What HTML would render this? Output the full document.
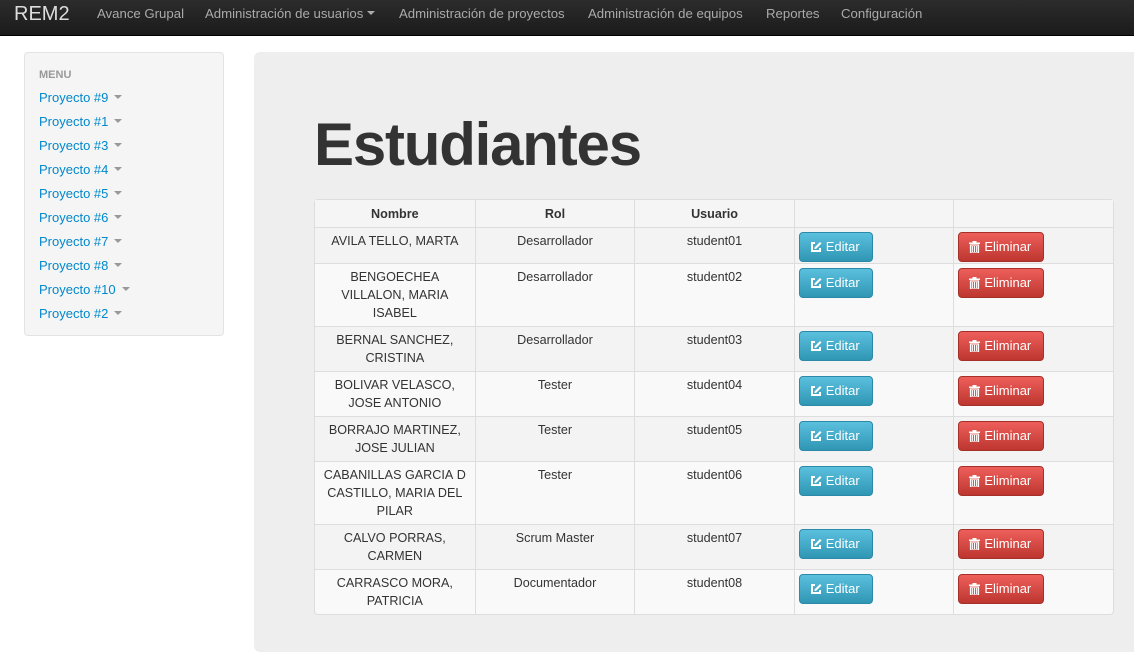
<!DOCTYPE html>
<html><head><meta charset="utf-8"><style>
*{box-sizing:border-box}
body{margin:0;width:1134px;height:615px;overflow:hidden;background:#fff;font-family:"Liberation Sans",Arial,sans-serif;font-size:13px;color:#333;position:relative}
.nav{position:absolute;left:0;top:0;width:1134px;height:36px;background:linear-gradient(#2c2c2c,#1b1b1b);border-bottom:1px solid #000}
.brand{position:absolute;left:14px;top:2px;font-size:20px;color:#ddd;line-height:24px}
.nav a{position:absolute;top:6px;color:#aaa;font-size:13.2px;line-height:16px}
.caret{display:inline-block;border-left:4px solid transparent;border-right:4px solid transparent;border-top:4px solid currentColor;vertical-align:middle;margin-left:4px;margin-top:-3px}
.side{position:absolute;left:24px;top:52px;width:200px;height:284px;background:#f5f5f5;border:1px solid #e3e3e3;border-radius:4px}
.side .h{position:absolute;left:14px;top:16px;font-size:11px;font-weight:bold;color:#999}
.side a{position:absolute;left:14px;color:#0088cc;font-size:13px}
.side a .caret{color:#999;margin-left:6px}
.hero{position:absolute;left:254px;top:52px;width:900px;height:600px;background:#eee;border-radius:6px}
h1{position:absolute;left:314px;top:110px;margin:0;font-size:60px;font-weight:bold;color:#333;letter-spacing:-1.2px;line-height:70px}
table{position:absolute;left:314px;top:199px;border-collapse:separate;border-spacing:0;border:1px solid #ddd;border-radius:4px;width:800px;background:#f9f9f9}
td,th{border-left:1px solid #ddd;border-top:1px solid #ddd;width:160px;text-align:center;vertical-align:top;padding:4px 6px 0;line-height:18px;font-size:12.6px}
th{border-top:0;background:#f5f5f5;height:27px;padding:5px 8px 0}
tr td:first-child,tr th:first-child{border-left:0}
tr:nth-child(even) td{background:#f3f3f3}
.b{display:inline-block;height:30px;border-radius:4px;color:#fff;font-size:13px;line-height:28px;padding:0 10px;text-align:left}
.e{background:linear-gradient(#5bc0de,#2f96b4);border:1px solid #2a8aa8;width:74px}
.d{background:linear-gradient(#ee5f5b,#bd362f);border:1px solid #a5302a;width:86px}
.bc{text-align:left;padding-left:4px}
svg{vertical-align:-2px;margin-right:4px}
</style></head><body>
<div class="nav"><div class="brand">REM2</div>
<a style="left:97px">Avance Grupal</a>
<a style="left:205px">Administración de usuarios<span class="caret"></span></a>
<a style="left:399px">Administración de proyectos</a>
<a style="left:588px">Administración de equipos</a>
<a style="left:766px">Reportes</a>
<a style="left:841px">Configuración</a></div>
<div class="side"><div class="h">MENU</div>
<a style="top:37px">Proyecto #9<span class="caret"></span></a>
<a style="top:61px">Proyecto #1<span class="caret"></span></a>
<a style="top:85px">Proyecto #3<span class="caret"></span></a>
<a style="top:109px">Proyecto #4<span class="caret"></span></a>
<a style="top:133px">Proyecto #5<span class="caret"></span></a>
<a style="top:157px">Proyecto #6<span class="caret"></span></a>
<a style="top:181px">Proyecto #7<span class="caret"></span></a>
<a style="top:205px">Proyecto #8<span class="caret"></span></a>
<a style="top:229px">Proyecto #10<span class="caret"></span></a>
<a style="top:253px">Proyecto #2<span class="caret"></span></a>
</div>
<div class="hero"></div>
<h1>Estudiantes</h1>
<table>
<tr><th>Nombre</th><th>Rol</th><th>Usuario</th><th></th><th></th></tr>
<tr style="height:36px"><td>AVILA TELLO, MARTA</td><td>Desarrollador</td><td>student01</td><td class="bc"><span class="b e"><svg width="12" height="12" viewBox="0 0 12 12"><path d="M5 2H2v8h8V7" fill="none" stroke="#fff" stroke-width="2"/><path d="M10 1l1.5 1.5L6 8H4.5V6.5z" fill="#fff"/></svg>Editar</span></td><td class="bc"><span class="b d"><svg width="11" height="12" viewBox="0 0 11 12"><rect x="0" y="1.5" width="11" height="1.5" fill="#fff"/><rect x="3.5" y="0" width="4" height="1.5" fill="#fff"/><path d="M1.5 4h8v8h-8z M3.3 5v6M5.5 5v6M7.7 5v6" fill="none" stroke="#fff" stroke-width="1.2"/></svg>Eliminar</span></td></tr>
<tr style="height:63px"><td>BENGOECHEA VILLALON, MARIA ISABEL</td><td>Desarrollador</td><td>student02</td><td class="bc"><span class="b e"><svg width="12" height="12" viewBox="0 0 12 12"><path d="M5 2H2v8h8V7" fill="none" stroke="#fff" stroke-width="2"/><path d="M10 1l1.5 1.5L6 8H4.5V6.5z" fill="#fff"/></svg>Editar</span></td><td class="bc"><span class="b d"><svg width="11" height="12" viewBox="0 0 11 12"><rect x="0" y="1.5" width="11" height="1.5" fill="#fff"/><rect x="3.5" y="0" width="4" height="1.5" fill="#fff"/><path d="M1.5 4h8v8h-8z M3.3 5v6M5.5 5v6M7.7 5v6" fill="none" stroke="#fff" stroke-width="1.2"/></svg>Eliminar</span></td></tr>
<tr style="height:45px"><td>BERNAL SANCHEZ, CRISTINA</td><td>Desarrollador</td><td>student03</td><td class="bc"><span class="b e"><svg width="12" height="12" viewBox="0 0 12 12"><path d="M5 2H2v8h8V7" fill="none" stroke="#fff" stroke-width="2"/><path d="M10 1l1.5 1.5L6 8H4.5V6.5z" fill="#fff"/></svg>Editar</span></td><td class="bc"><span class="b d"><svg width="11" height="12" viewBox="0 0 11 12"><rect x="0" y="1.5" width="11" height="1.5" fill="#fff"/><rect x="3.5" y="0" width="4" height="1.5" fill="#fff"/><path d="M1.5 4h8v8h-8z M3.3 5v6M5.5 5v6M7.7 5v6" fill="none" stroke="#fff" stroke-width="1.2"/></svg>Eliminar</span></td></tr>
<tr style="height:45px"><td>BOLIVAR VELASCO, JOSE ANTONIO</td><td>Tester</td><td>student04</td><td class="bc"><span class="b e"><svg width="12" height="12" viewBox="0 0 12 12"><path d="M5 2H2v8h8V7" fill="none" stroke="#fff" stroke-width="2"/><path d="M10 1l1.5 1.5L6 8H4.5V6.5z" fill="#fff"/></svg>Editar</span></td><td class="bc"><span class="b d"><svg width="11" height="12" viewBox="0 0 11 12"><rect x="0" y="1.5" width="11" height="1.5" fill="#fff"/><rect x="3.5" y="0" width="4" height="1.5" fill="#fff"/><path d="M1.5 4h8v8h-8z M3.3 5v6M5.5 5v6M7.7 5v6" fill="none" stroke="#fff" stroke-width="1.2"/></svg>Eliminar</span></td></tr>
<tr style="height:45px"><td>BORRAJO MARTINEZ, JOSE JULIAN</td><td>Tester</td><td>student05</td><td class="bc"><span class="b e"><svg width="12" height="12" viewBox="0 0 12 12"><path d="M5 2H2v8h8V7" fill="none" stroke="#fff" stroke-width="2"/><path d="M10 1l1.5 1.5L6 8H4.5V6.5z" fill="#fff"/></svg>Editar</span></td><td class="bc"><span class="b d"><svg width="11" height="12" viewBox="0 0 11 12"><rect x="0" y="1.5" width="11" height="1.5" fill="#fff"/><rect x="3.5" y="0" width="4" height="1.5" fill="#fff"/><path d="M1.5 4h8v8h-8z M3.3 5v6M5.5 5v6M7.7 5v6" fill="none" stroke="#fff" stroke-width="1.2"/></svg>Eliminar</span></td></tr>
<tr style="height:63px"><td>CABANILLAS GARCIA&nbsp;D CASTILLO, MARIA DEL PILAR</td><td>Tester</td><td>student06</td><td class="bc"><span class="b e"><svg width="12" height="12" viewBox="0 0 12 12"><path d="M5 2H2v8h8V7" fill="none" stroke="#fff" stroke-width="2"/><path d="M10 1l1.5 1.5L6 8H4.5V6.5z" fill="#fff"/></svg>Editar</span></td><td class="bc"><span class="b d"><svg width="11" height="12" viewBox="0 0 11 12"><rect x="0" y="1.5" width="11" height="1.5" fill="#fff"/><rect x="3.5" y="0" width="4" height="1.5" fill="#fff"/><path d="M1.5 4h8v8h-8z M3.3 5v6M5.5 5v6M7.7 5v6" fill="none" stroke="#fff" stroke-width="1.2"/></svg>Eliminar</span></td></tr>
<tr style="height:45px"><td>CALVO PORRAS, CARMEN</td><td>Scrum Master</td><td>student07</td><td class="bc"><span class="b e"><svg width="12" height="12" viewBox="0 0 12 12"><path d="M5 2H2v8h8V7" fill="none" stroke="#fff" stroke-width="2"/><path d="M10 1l1.5 1.5L6 8H4.5V6.5z" fill="#fff"/></svg>Editar</span></td><td class="bc"><span class="b d"><svg width="11" height="12" viewBox="0 0 11 12"><rect x="0" y="1.5" width="11" height="1.5" fill="#fff"/><rect x="3.5" y="0" width="4" height="1.5" fill="#fff"/><path d="M1.5 4h8v8h-8z M3.3 5v6M5.5 5v6M7.7 5v6" fill="none" stroke="#fff" stroke-width="1.2"/></svg>Eliminar</span></td></tr>
<tr style="height:45px"><td>CARRASCO MORA, PATRICIA</td><td>Documentador</td><td>student08</td><td class="bc"><span class="b e"><svg width="12" height="12" viewBox="0 0 12 12"><path d="M5 2H2v8h8V7" fill="none" stroke="#fff" stroke-width="2"/><path d="M10 1l1.5 1.5L6 8H4.5V6.5z" fill="#fff"/></svg>Editar</span></td><td class="bc"><span class="b d"><svg width="11" height="12" viewBox="0 0 11 12"><rect x="0" y="1.5" width="11" height="1.5" fill="#fff"/><rect x="3.5" y="0" width="4" height="1.5" fill="#fff"/><path d="M1.5 4h8v8h-8z M3.3 5v6M5.5 5v6M7.7 5v6" fill="none" stroke="#fff" stroke-width="1.2"/></svg>Eliminar</span></td></tr>
</table>
</body></html>
